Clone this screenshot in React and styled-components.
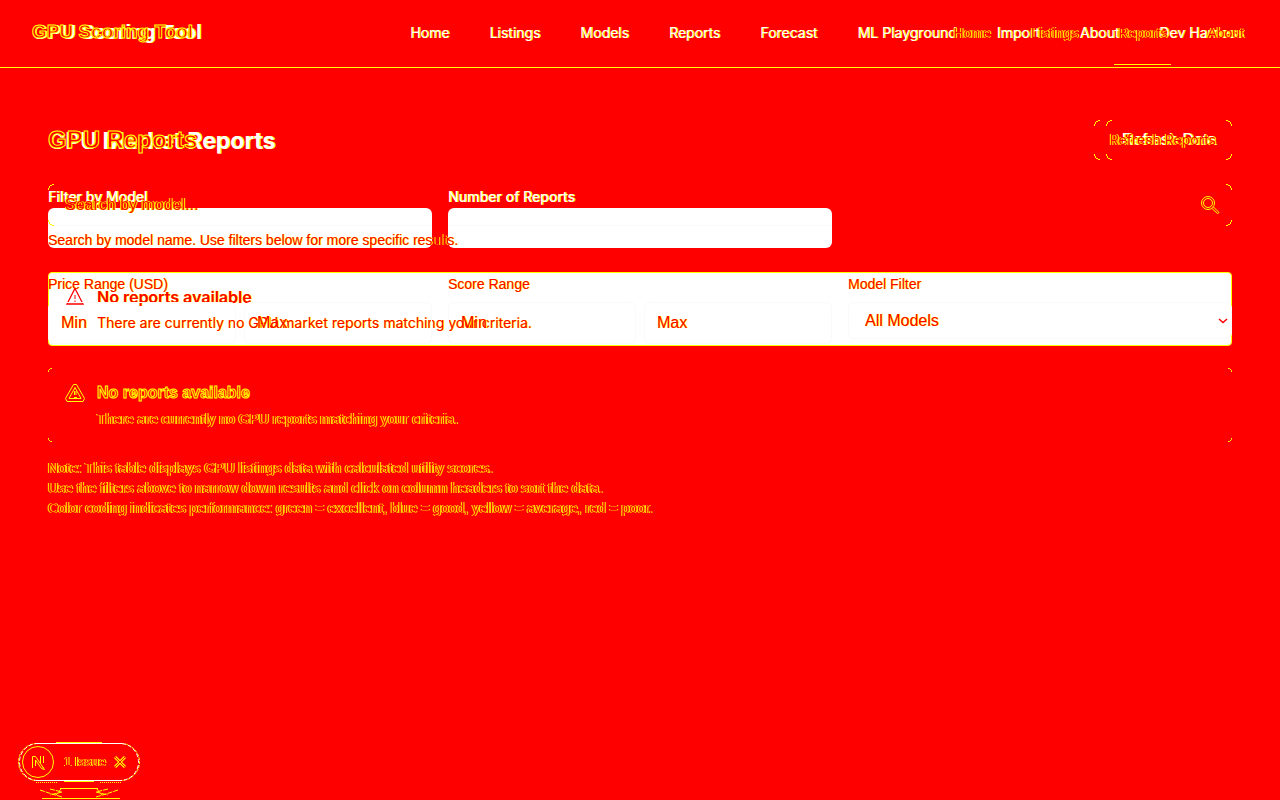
import React from "react";
import styled, { createGlobalStyle, css } from "styled-components";

const RED = "#ff0000";
const YELLOW = "#ffff00";
const FAINT = "#fafafa";
const INTER = `Inter, "Liberation Sans", sans-serif`;

const Global = createGlobalStyle`
  *, *::before, *::after { box-sizing: border-box; }
  body {
    margin: 0;
    background: ${RED};
    font-family: "Liberation Sans", Arial, sans-serif;
    font-size: 14px;
    line-height: 20px;
  }
  button, input, select { font: inherit; }
  h1, h2, p { margin: 0; }
`;

const inks = {
  solid: css`color: #ffffff; text-shadow: 1px 0 ${YELLOW};`,
  bright: css`color: #ffffff; text-shadow: 1px 0 ${YELLOW};`,
  outline: css`color: ${RED}; -webkit-text-stroke: 1px ${YELLOW};`,
  thin: css`color: ${RED}; text-shadow: 1px 0 ${YELLOW}, -1px 0 ${YELLOW};`,
  red: css`color: ${RED}; text-shadow: 1px 0 ${YELLOW};`,
};

const Stack = styled.div`
  display: grid;
  grid-template-columns: minmax(0, 1fr);
  min-height: 100vh;
`;

const Layer = styled.div`
  grid-area: 1 / 1;
  min-width: 0;
`;

const Header = styled.header`
  display: flex;
  justify-content: space-between;
  align-items: stretch;
  height: 68px;
  padding: 0 32px;
  border-bottom: 1px solid ${(p) => (p.$line ? YELLOW : "transparent")};
`;

const Brand = styled.a`
  align-self: center;
  font-size: ${(p) => (p.$small ? 19 : 20)}px;
  line-height: 28px;
  font-weight: 700;
  text-decoration: none;
  white-space: nowrap;
  padding-bottom: 4px;
  ${(p) => inks[p.$ink]}
`;

const Nav = styled.nav`
  display: flex;
  gap: 32px;
  padding-bottom: ${(p) => (p.$underlined ? 2 : 0)}px;
`;

const NavLink = styled.a`
  display: flex;
  align-items: center;
  padding: ${(p) => (p.$inter ? 0 : 2)}px 4px 0;
  font-family: ${(p) => (p.$inter ? INTER : "inherit")};
  text-decoration: none;
  white-space: nowrap;
  border-bottom: 1px solid ${(p) => (p.$active ? YELLOW : "transparent")};
  ${(p) => inks[p.$ink]}
`;

const Main = styled.main`
  padding: 52px 48px 0;
`;

const TitleRow = styled.div`
  display: flex;
  align-items: center;
  justify-content: space-between;
  height: 40px;
  margin-bottom: 24px;
`;

const Title = styled.h1`
  font-family: ${(p) => (p.$inter ? INTER : "inherit")};
  font-size: ${(p) => (p.$inter ? 23 : 24)}px;
  line-height: 32px;
  padding-top: ${(p) => (p.$inter ? 2 : 0)}px;
  font-weight: 700;
  white-space: nowrap;
  ${(p) => inks[p.$ink]}
`;

const corner = (at, origin, r) =>
  `radial-gradient(circle at ${origin}, transparent ${r - 1}px, ${YELLOW} ${r - 1}px, ${YELLOW} ${r}px, transparent ${r}px) ${at} / ${r}px ${r}px no-repeat`;

const corners = (r) => css`
  background:
    ${corner("left top", "100% 100%", r)},
    ${corner("right top", "0 100%", r)},
    ${corner("left bottom", "100% 0", r)},
    ${corner("right bottom", "0 0", r)};
`;

const Button = styled.button`
  height: 40px;
  padding: 0 16px;
  border: 0;
  white-space: nowrap;
  font-family: ${(p) => (p.$small ? INTER : "inherit")};
  font-size: ${(p) => (p.$small ? 14 : 16)}px;
  ${corners(6)}
  ${(p) => inks[p.$ink]}
`;

const Columns = styled.div`
  display: grid;
  grid-template-columns: repeat(3, minmax(0, 1fr));
  gap: 16px;
  margin-bottom: 24px;
`;

const Field = styled.div`
  display: flex;
  flex-direction: column;
`;

const Label = styled.label`
  font-family: ${(p) => (p.$bold ? INTER : "inherit")};
  line-height: ${(p) => (p.$bold ? 22 : 20)}px;
  padding-top: ${(p) => (p.$bold ? 2 : 0)}px;
  font-weight: ${(p) => (p.$bold ? 500 : 400)};
  margin-bottom: ${(p) => (p.$bold ? 0 : 8)}px;
  ${(p) => inks[p.$bold ? "bright" : "red"]}
`;

const SolidInput = styled.input`
  width: 100%;
  height: 40px;
  border: 0;
  border-radius: 6px;
  padding: 0 12px;
  outline: 0;
  background: linear-gradient(${FAINT}, ${FAINT}) 0 17px / 100% 1px no-repeat #ffffff;
`;

const SearchBox = styled.div`
  display: flex;
  align-items: center;
  height: 42px;
  padding: 0 12px 0 17px;
  ${corners(6)}
`;

const SearchInput = styled.input`
  flex: 1;
  min-width: 0;
  height: 40px;
  padding: 0;
  border: 0;
  outline: 0;
  background: none;
  font-size: 16px;
  &::placeholder { opacity: 1; ${inks.thin} }
`;

const Helper = styled.p`
  margin: 4px 0 24px;
  ${inks.red}
`;

const Pair = styled.div`
  display: grid;
  grid-template-columns: 1fr 1fr;
  gap: 8px;
`;

const RangeInput = styled.input`
  width: 100%;
  height: 42px;
  padding: 0 12px;
  border: 1px solid ${FAINT};
  border-radius: 6px;
  outline: 0;
  background: none;
  font-size: 16px;
  &::placeholder { opacity: 1; ${inks.red} }
`;

const SelectWrap = styled.div`
  display: grid;
  align-items: center;
  svg { grid-area: 1 / 1; justify-self: end; margin-right: 4px; pointer-events: none; }
`;

const Select = styled.select`
  grid-area: 1 / 1;
  appearance: none;
  width: 100%;
  height: 37px;
  padding: 0 16px;
  border: 1px solid ${FAINT};
  border-radius: 6px;
  outline: 0;
  background: none;
  font-size: 16px;
  ${inks.red}
`;

const Alert = styled.section`
  display: flex;
  gap: 12px;
  height: 74px;
  padding: 12px 16px;
  border: 1px solid ${(p) => (p.$filled ? YELLOW : "transparent")};
  border-radius: 4px;
  margin-bottom: 16px;
  font-family: ${(p) => (p.$filled ? INTER : "inherit")};
  ${(p) => (p.$filled ? css`background: #ffffff;` : corners(4))}
  background-origin: border-box;
  svg { flex: none; margin-top: 2px; }
`;

const AlertTitle = styled.h2`
  font-size: 16px;
  line-height: 24px;
  font-weight: ${(p) => (p.$semi ? 600 : 700)};
  margin-bottom: 4px;
  ${(p) => inks[p.$ink]}
`;

const AlertText = styled.p`
  ${(p) => inks[p.$ink]}
`;

const Notes = styled.div`
  ${inks.thin}
`;

const Widget = styled.aside`
  position: fixed;
  left: 16px;
  bottom: 0;
  width: 128px;
  height: 60px;
  svg { position: absolute; inset: 0; }
`;

const WidgetRow = styled.div`
  position: relative;
  display: flex;
  align-items: center;
  justify-content: space-between;
  height: 40px;
  padding: 4px 18px 0 48px;
`;

const WidgetText = styled.span`
  font-size: 13px;
  ${inks.thin}
`;

const CloseButton = styled.button`
  display: flex;
  padding: 0;
  border: 0;
  background: none;
  svg { position: static; }
`;

const Warning = ({ outline }) => (
  <svg width="20" height="20" viewBox="0 0 20 20" fill="none" stroke={outline ? YELLOW : RED} aria-hidden="true">
    {outline ? (
      <>
        <path d="M8.5 1.5h3l8 14-1.500 3H2l-1.500-3z" />
        <path d="M10 4.500l6 11H4z" />
        <path d="M9.500 8v4M11 8v4M9 14.500h3" />
      </>
    ) : (
      <>
        <path d="M10 1.500l8 15.500H2z" strokeWidth="1.300" />
        <path d="M10 8v4M10 13.500v1.500" />
      </>
    )}
  </svg>
);

const AlertBox = ({ filled, text }) => (
  <Alert $filled={filled}>
    <Warning outline={!filled} />
    <div>
      <AlertTitle $semi={filled} $ink={filled ? "red" : "outline"}>No reports available</AlertTitle>
      <AlertText $ink={filled ? "red" : "thin"}>{text}</AlertText>
    </div>
  </Alert>
);

const Range = ({ id, label }) => (
  <Field>
    <Label htmlFor={id}>{label}</Label>
    <Pair>
      <RangeInput id={id} placeholder="Min" />
      <RangeInput placeholder="Max" aria-label={`${label} maximum`} />
    </Pair>
  </Field>
);

const wideNav = ["Home", "Listings", "Models", "Reports", "Forecast", "ML Playground", "Import", "About", "Dev Harness"];
const shortNav = ["Home", "Listings", "Reports", "About"];

export default function App() {
  return (
    <>
      <Global />
      <Stack>
        <Layer>
          <Header>
            <Brand href="#" $ink="solid">GPU Scoring Tool</Brand>
            <Nav>
              {wideNav.map((name) => (
                <NavLink key={name} href="#" $inter $ink="bright">{name}</NavLink>
              ))}
            </Nav>
          </Header>
          <Main>
            <TitleRow>
              <Title $inter $ink="solid">GPU Market Reports</Title>
              <Button $ink="solid">Refresh Data</Button>
            </TitleRow>
            <Columns>
              <Field>
                <Label $bold htmlFor="model">Filter by Model</Label>
                <SolidInput id="model" />
              </Field>
              <Field>
                <Label $bold htmlFor="count">Number of Reports</Label>
                <SolidInput id="count" />
              </Field>
            </Columns>
            <AlertBox filled text="There are currently no GPU market reports matching your criteria." />
          </Main>
        </Layer>

        <Layer>
          <Header $line>
            <Brand href="#" $small $ink="outline">GPU Scoring Tool</Brand>
            <Nav $underlined>
              {shortNav.map((name) => (
                <NavLink key={name} href="#" $ink="thin" $active={name === "Reports"}>{name}</NavLink>
              ))}
            </Nav>
          </Header>
          <Main>
            <TitleRow>
              <Title $ink="outline">GPU Reports</Title>
              <Button $small $ink="thin">Refresh Reports</Button>
            </TitleRow>
            <SearchBox>
              <SearchInput placeholder="Search by model..." aria-label="Search by model" />
              <svg width="20" height="20" viewBox="0 0 20 20" fill="none" stroke={YELLOW} aria-hidden="true">
                <circle cx="8" cy="8" r="6.500" />
                <circle cx="8" cy="8" r="4.500" />
                <path d="M12 13.500l5.500 5M13.500 12l5.500 5.500-1.500 1" />
              </svg>
            </SearchBox>
            <Helper>Search by model name. Use filters below for more specific results.</Helper>
            <Columns>
              <Range id="price" label="Price Range (USD)" />
              <Range id="score" label="Score Range" />
              <Field>
                <Label htmlFor="models">Model Filter</Label>
                <SelectWrap>
                  <Select id="models" defaultValue="all">
                    <option value="all">All Models</option>
                  </Select>
                  <svg width="10" height="6" viewBox="0 0 10 6" fill="none" stroke={RED} aria-hidden="true">
                    <path d="M1 1l4 3.500 4-3.500" strokeWidth="1.500" />
                  </svg>
                </SelectWrap>
              </Field>
            </Columns>
            <AlertBox text="There are currently no GPU reports matching your criteria." />
            <Notes>
              <p>Note: This table displays GPU listings data with calculated utility scores.</p>
              <p>Use the filters above to narrow down results and click on column headers to sort the data.</p>
              <p>Color coding indicates performance: green = excellent, blue = good, yellow = average, red = poor.</p>
            </Notes>
          </Main>
        </Layer>
      </Stack>

      <Widget>
        <svg width="128" height="60" viewBox="0 0 128 60" fill="none" stroke={YELLOW} aria-hidden="true">
          <rect x="2.500" y="3.500" width="121" height="37" rx="18.500" strokeDasharray="3 1" />
          <rect x="3.500" y="3.500" width="119" height="37" rx="18.500" stroke="#ffffff" strokeDasharray="4 2" />
          <path d="M20 3.500h86M20 40.500h86" stroke="#ffffff" />
          <path d="M40 2.500h46M48 41.500h30" />
          <circle cx="22" cy="22" r="15.500" />
          <path d="M16.500 28V16.500h3l8 11.500M19.500 26v-6l6 8.500 3 1-2-3M24.500 16v7M27.500 16v7" />
          <path d="M20 42.500h22M84 42.500h22" strokeDasharray="1 1" />
          <path d="M24 50l12 4 10 3M34 49l12 3-12 3M102 50l-12 4-10 3M92 49l-12 3 12 3M46 48l-6 7M80 48l6 7" strokeDasharray="5 1" />
          <path d="M44 48.500h38M26 58.500h78" />
        </svg>
        <WidgetRow>
          <WidgetText>1 Issue</WidgetText>
          <CloseButton aria-label="Close">
            <svg width="12" height="12" viewBox="0 0 12 12" fill="none" aria-hidden="true">
              <path d="M1 1l10 10M11 1L1 11" stroke={YELLOW} strokeWidth="3" />
              <path d="M1 1l10 10M11 1L1 11" stroke={RED} />
            </svg>
          </CloseButton>
        </WidgetRow>
      </Widget>
    </>
  );
}
